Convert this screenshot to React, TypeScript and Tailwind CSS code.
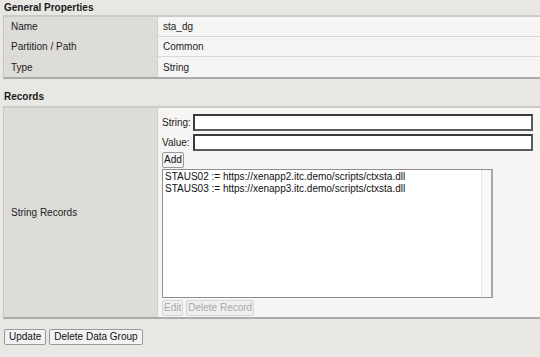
import React from "react";

const font = { fontFamily: '"Liberation Sans", Arial, sans-serif' };

function PropRow({ label, value, last }: { label: string; value: string; last?: boolean }) {
  return (
    <div className={`grid h-[20px] grid-cols-[154px_1fr] ${last ? "" : "border-b border-[#d8d7d4]"}`}>
      <div className="flex items-center border-r border-[#cfceca] bg-[#dddcd8] pl-[7px]">{label}</div>
      <div className="flex items-center bg-[#f6f5f3] pl-[5px]">{value}</div>
    </div>
  );
}

function Btn({ children, disabled, wide }: { children: React.ReactNode; disabled?: boolean; wide?: boolean }) {
  return (
    <button
      disabled={disabled}
      className={`h-[16px] rounded-[2px] border text-[10px] leading-none ${wide ? "px-[4px]" : "px-[1px]"} ${
        disabled
          ? "border-[#d6d6d6] bg-[#efefef] text-[#a8a8a8]"
          : "border-[#9a9a9a] bg-[#f3f3f3] text-[#111]"
      }`}
    >
      {children}
    </button>
  );
}

export default function App() {
  return (
    <div style={font} className="h-[357px] w-[540px] overflow-hidden bg-[#e8e7e3] text-[10px] text-[#222]">
      {/* General Properties */}
      <div className="flex h-[15px] items-center pl-[4px] font-bold text-[#1a1a1a]">General Properties</div>
      <div className="ml-[3px] border-t-2 border-b-2 border-l border-t-[#cbcac6] border-b-[#adacaa] border-l-[#c6c5c1]">
        <PropRow label="Name" value="sta_dg" />
        <PropRow label="Partition / Path" value="Common" />
        <PropRow label="Type" value="String" last />
      </div>

      {/* Records */}
      <div className="flex h-[27px] items-end pb-[2px] pl-[4px] font-bold text-[#1a1a1a]">Records</div>
      <div className="ml-[3px] grid h-[213px] grid-cols-[154px_1fr] border-t-2 border-b-2 border-l border-t-[#cbcac6] border-b-[#adacaa] border-l-[#c6c5c1]">
        <div className="flex items-center border-r border-[#cfceca] bg-[#dddcd8] pl-[7px]">String Records</div>
        <div className="bg-[#f6f5f3] pl-[4px] pr-[7px] pt-[6px]">
          <div className="grid grid-cols-[31px_1fr] items-center gap-y-[3px]">
            <span>String:</span>
            <input className="h-[17px] w-full border-2 border-[#3a3a3a] border-b-[#5a5a5a] border-r-[#5a5a5a] bg-white outline-none" />
            <span>Value:</span>
            <input className="h-[17px] w-full border-2 border-[#3a3a3a] border-b-[#5a5a5a] border-r-[#5a5a5a] bg-white outline-none" />
          </div>
          <div className="mt-[1px]">
            <Btn>Add</Btn>
          </div>
          <div className="mt-[1px] flex h-[129px] w-[331px] border border-[#8f8f8f] border-r-2 border-r-[#a8a8a8] bg-white">
            <div className="flex-1 pl-[2px] pt-[1px] leading-[12px] text-[#111]">
              <div>STAUS02 := https://xenapp2.itc.demo/scripts/ctxsta.dll</div>
              <div>STAUS03 := https://xenapp3.itc.demo/scripts/ctxsta.dll</div>
            </div>
            <div className="w-[10px] border-l border-[#e6e6e6] bg-[#f9f9f9]" />
          </div>
          <div className="mt-[2px] flex gap-[3px]">
            <Btn disabled>Edit</Btn>
            <Btn disabled>Delete Record</Btn>
          </div>
        </div>
      </div>

      <div className="mt-[10px] flex gap-[3px] pl-[4px]">
        <Btn wide>Update</Btn>
        <Btn wide>Delete Data Group</Btn>
      </div>
    </div>
  );
}
